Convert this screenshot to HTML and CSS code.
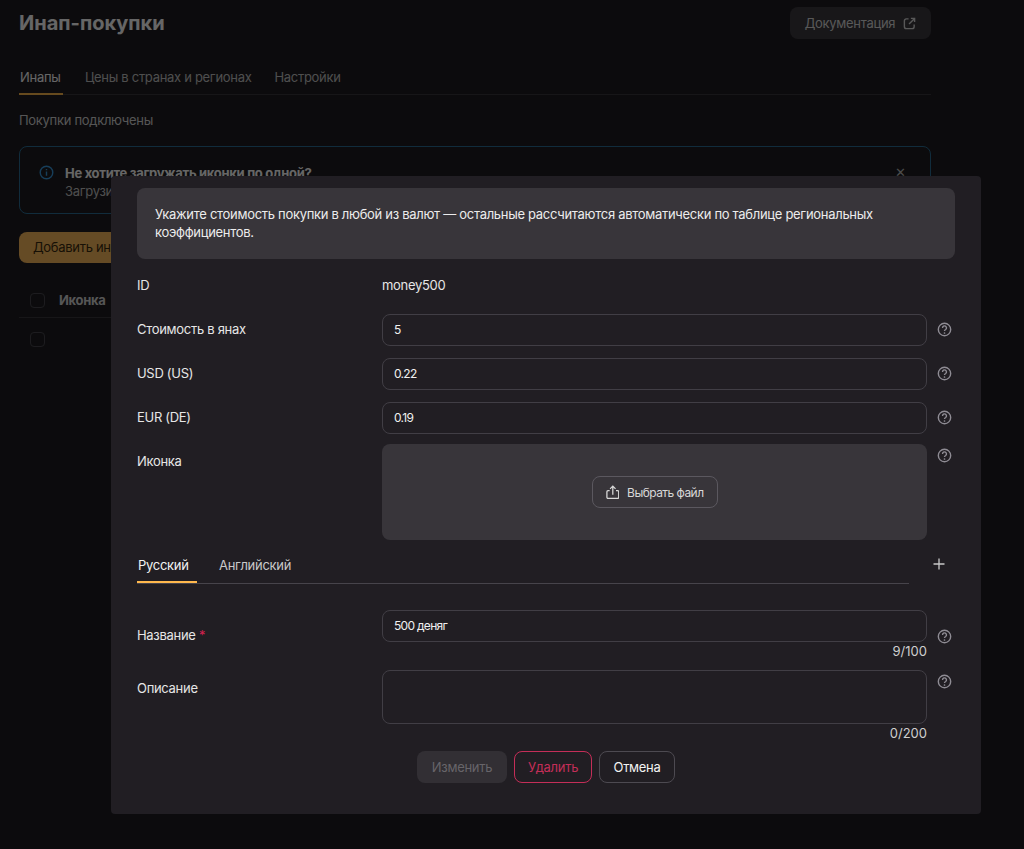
FILE: index.html
```html
<!DOCTYPE html>
<html lang="ru">
<head>
  <meta charset="UTF-8" />
  <meta name="viewport" content="width=device-width, initial-scale=1.0" />
  <title>Инап-покупки</title>
  <link rel="stylesheet" href="styles.css">
</head>
<body>
  <div class="page">
    <header class="page-head">
      <h1>Инап-покупки</h1>
      <a class="doc-btn" href="#">Документация
        <svg width="13" height="13" viewBox="0 0 14 14" fill="none" stroke="currentColor" stroke-width="1.5">
          <path d="M6 2H3.5A2 2 0 0 0 1.500 4v6.500a2 2 0 0 0 2 2H10a2 2 0 0 0 2-2V8" />
          <path d="M8.500 1.500h4v4M12.500 1.500 6.500 7.500" />
        </svg>
      </a>
    </header>

    <nav class="page-tabs">
      <a class="active" href="#">Инапы</a>
      <a href="#">Цены в странах и регионах</a>
      <a href="#">Настройки</a>
    </nav>

    <p class="status">Покупки подключены</p>

    <div class="alert">
      <svg class="alert-icon" width="15" height="15" viewBox="0 0 16 16" fill="none" stroke="currentColor" stroke-width="1.5">
        <circle cx="8" cy="8" r="6.700" />
        <path d="M8 7v4.500M8 4.200v1.400" />
      </svg>
      <div>
        <div class="alert-title">Не хотите загружать иконки по одной?</div>
        <div class="alert-text">Загрузите архив</div>
      </div>
      <span class="alert-close">✕</span>
    </div>

    <button class="add-btn">Добавить инап</button>

    <div class="table-head">
      <span class="check"></span>
      <b>Иконка</b>
    </div>
    <div class="table-row">
      <span class="check"></span>
    </div>
  </div>

  <div class="scrim"></div>

  <div class="modal">
    <div class="hint">Укажите стоимость покупки в любой из валют — остальные рассчитаются автоматически по таблице региональных коэффициентов.</div>

    <div class="row row-id">
      <label>ID</label>
      <div class="plain-value">money500</div>
    </div>

    <div class="row">
      <label>Стоимость в янах</label>
      <div class="input">5</div>
      <svg class="help" viewBox="0 0 16 16"><use href="#q" /></svg>
    </div>
    <div class="row">
      <label>USD (US)</label>
      <div class="input">0.22</div>
      <svg class="help" viewBox="0 0 16 16"><use href="#q" /></svg>
    </div>
    <div class="row">
      <label>EUR (DE)</label>
      <div class="input">0.19</div>
      <svg class="help" viewBox="0 0 16 16"><use href="#q" /></svg>
    </div>

    <div class="row row-top row-icon">
      <label>Иконка</label>
      <div class="dropzone">
        <button class="file-btn">
          <svg width="15" height="16" viewBox="0 0 15 16" fill="none" stroke="currentColor" stroke-width="1.400">
            <path d="M4 6.500H2.200A1.200 1.200 0 0 0 1 7.700v6.100A1.200 1.200 0 0 0 2.200 15h10.600a1.200 1.200 0 0 0 1.200-1.200V7.700a1.200 1.200 0 0 0-1.200-1.200H11" />
            <path d="M7.500 11V1.500M4.500 4.500l3-3 3 3" />
          </svg>
          Выбрать файл
        </button>
      </div>
      <svg class="help" viewBox="0 0 16 16"><use href="#q" /></svg>
    </div>

    <div class="lang-bar">
      <div class="lang-tabs">
        <a class="active" href="#">Русский</a>
        <a href="#">Английский</a>
      </div>
      <svg class="plus" width="12" height="12" viewBox="0 0 12 12" stroke="currentColor" stroke-width="1.300">
        <path d="M6 0.500v11M0.500 6h11" />
      </svg>
    </div>

    <div class="row row-name">
      <label>Название <i>*</i></label>
      <div>
        <div class="input input-name">500 деняг</div>
        <div class="counter">9/100</div>
      </div>
      <svg class="help" viewBox="0 0 16 16"><use href="#q" /></svg>
    </div>

    <div class="row row-top row-desc">
      <label>Описание</label>
      <div>
        <div class="textarea"></div>
        <div class="counter">0/200</div>
      </div>
      <svg class="help" viewBox="0 0 16 16"><use href="#q" /></svg>
    </div>

    <div class="actions">
      <button class="btn btn-disabled">Изменить</button>
      <button class="btn btn-danger">Удалить</button>
      <button class="btn btn-cancel">Отмена</button>
    </div>
  </div>

  <svg width="0" height="0" class="defs">
    <symbol id="q" viewBox="0 0 16 16">
      <circle cx="8" cy="8" r="6.600" fill="none" stroke="currentColor" stroke-width="1.500" />
      <path d="M5.900 6.300A2.100 2.100 0 1 1 9.200 8c-.8.500-1.200.900-1.200 1.700" fill="none" stroke="currentColor" stroke-width="1.500" />
      <circle cx="8" cy="11.700" r=".9" fill="currentColor" />
    </symbol>
  </svg>
</body>
</html>
```

FILE: styles.css
```css
* {
  box-sizing: border-box;
}

body {
  margin: 0;
  background: #1f1d21;
  color: #fff;
  font-family: Inter, "Noto Sans", sans-serif;
  font-size: 13px;
  letter-spacing: -0.3px;
  height: 849px;
  overflow: hidden;
}

a {
  color: inherit;
  text-decoration: none;
}

button {
  font-family: inherit;
  font-size: 13px;
  letter-spacing: inherit;
}

.defs {
  position: absolute;
}

/* Page behind the modal */
.page {
  width: 912px;
  margin-left: 19px;
}

.page-head {
  display: flex;
  justify-content: space-between;
  align-items: center;
  height: 32px;
  margin-top: 7px;
}

.page-head h1 {
  margin: 0;
  font-size: 20px;
  font-weight: 700;
  letter-spacing: 0;
}

.doc-btn {
  display: flex;
  align-items: center;
  gap: 8px;
  height: 32px;
  width: 141px;
  justify-content: center;
  background: #3d3a40;
  border-radius: 8px;
  color: #ddd;
}

.page-tabs {
  display: flex;
  gap: 21px;
  height: 34px;
  margin-top: 22px;
  padding-top: 8px;
  border-bottom: 1px solid #3a383c;
}

.page-tabs a {
  color: #c4c4c4;
  height: 26px;
  line-height: 16px;
  padding: 0 1px;
}

.page-tabs a.active {
  width: 44px;
  color: #fff;
  border-bottom: 2px solid #ffb84d;
}

.status {
  margin: 17px 0 0;
  line-height: 16px;
  color: #d6d6d6;
}

.alert {
  display: flex;
  gap: 11px;
  height: 68px;
  margin-top: 18px;
  padding: 18px 19px;
  border: 1px solid #2b6f96;
  border-radius: 8px;
  position: relative;
}

.alert-icon {
  color: #3a9be0;
  flex: none;
}

.alert-title {
  font-weight: 700;
}

.alert-text {
  margin-top: 2px;
  color: #c4c4c4;
}

.alert-close {
  position: absolute;
  right: 24px;
  top: 17px;
  color: #bbb;
}

.add-btn {
  display: block;
  width: 180px;
  height: 31px;
  margin-top: 18px;
  text-align: left;
  padding: 0 14px 1px;
  background: #fdbb5c;
  color: #3b2c10;
  border: 0;
  border-radius: 8px;
}

.table-head,
.table-row {
  display: flex;
  align-items: center;
  gap: 14px;
  padding-left: 11px;
}

.table-head {
  height: 35px;
  margin-top: 20px;
  color: #d6d6d6;
  border-bottom: 1px solid #3a383c;
}

.table-row {
  height: 42px;
}

.check {
  width: 15px;
  height: 15px;
  border: 1px solid #4a484f;
  border-radius: 4px;
}

.scrim {
  position: fixed;
  inset: 0;
  background: rgba(0, 0, 0, 0.6);
}

/* Modal */
.modal {
  position: absolute;
  left: 111px;
  top: 176px;
  width: 870px;
  height: 638px;
  padding: 12px 26px 0;
  background: #211e23;
  border-radius: 4px;
  color: #e6e6e6;
}

.hint {
  height: 71px;
  padding: 17px 18px;
  background: #38353a;
  border-radius: 8px;
  line-height: 18px;
  color: #ececec;
}

.row {
  display: grid;
  grid-template-columns: 245px 545px 15px;
  align-items: center;
  margin-top: 12px;
}

.row label {
  margin-bottom: 2px;
}

.row > .help {
  margin-left: 10px;
  margin-bottom: 2px;
}

.row-id {
  height: 32px;
  margin-top: 10px;
  margin-bottom: 13px;
}

.row-id label {
  margin-bottom: 0;
}

.row-top {
  align-items: start;
}

.row-icon {
  margin-top: 10px;
}

.row-icon label {
  margin-top: 9px;
}

.row-icon > .help {
  margin-top: 4px;
}

.row-name {
  margin-top: 26px;
}

.row-name label {
  margin-bottom: 0;
}

.row-name > .help {
  margin-top: 2px;
  margin-bottom: 0;
}

.row-desc {
  margin-top: 10px;
}

.row-desc label {
  margin-top: 10px;
}

.row-desc > .help {
  margin-top: 4px;
}

.help {
  width: 15px;
  height: 15px;
  color: #8f8c94;
}

.input {
  height: 32px;
  padding: 0 11px;
  border: 1px solid #413e45;
  border-radius: 8px;
  line-height: 30px;
  font-size: 12px;
  letter-spacing: -0.7px;
  color: #f0f0f0;
}

.textarea {
  height: 54px;
  border: 1px solid #413e45;
  border-radius: 8px;
}

.counter {
  height: 18px;
  line-height: 18px;
  text-align: right;
  letter-spacing: 0;
  color: #cfcfcf;
}

.dropzone {
  display: flex;
  align-items: center;
  justify-content: center;
  height: 96px;
  background: #38353a;
  border-radius: 8px;
}

.file-btn {
  display: flex;
  align-items: center;
  gap: 8px;
  width: 126px;
  height: 32px;
  padding: 0 13px;
  background: transparent;
  border: 1px solid #5b585f;
  border-radius: 8px;
  color: #d8d8d8;
  font-size: 12px;
  letter-spacing: -0.55px;
  white-space: nowrap;
}

.lang-bar {
  display: flex;
  align-items: flex-start;
  gap: 24px;
  height: 44px;
}

.lang-tabs {
  display: flex;
  gap: 21px;
  width: 772px;
  height: 44px;
  padding-top: 17px;
  border-bottom: 1px solid #47444b;
}

.lang-tabs a {
  height: 26px;
  line-height: 16px;
  color: #c9c9c9;
  padding: 0 1px;
}

.lang-tabs a.active {
  width: 60px;
  color: #f2f2f2;
  border-bottom: 2px solid #ffb84d;
}

.plus {
  margin-top: 18px;
  color: #c8c8c8;
}

i {
  color: #d4214f;
  font-style: normal;
}

.actions {
  display: flex;
  justify-content: center;
  gap: 7px;
  margin-top: 9px;
}

.btn {
  height: 32px;
  padding: 0;
  background: transparent;
  border: 1px solid #4d4a51;
  border-radius: 8px;
  color: #f2f2f2;
}

.btn-disabled {
  width: 90px;
  background: #322f34;
  border: 0;
  color: #676469;
}

.btn-danger {
  width: 78px;
  border-color: #c42e58;
  color: #c42e58;
}

.btn-cancel {
  width: 76px;
}
```
